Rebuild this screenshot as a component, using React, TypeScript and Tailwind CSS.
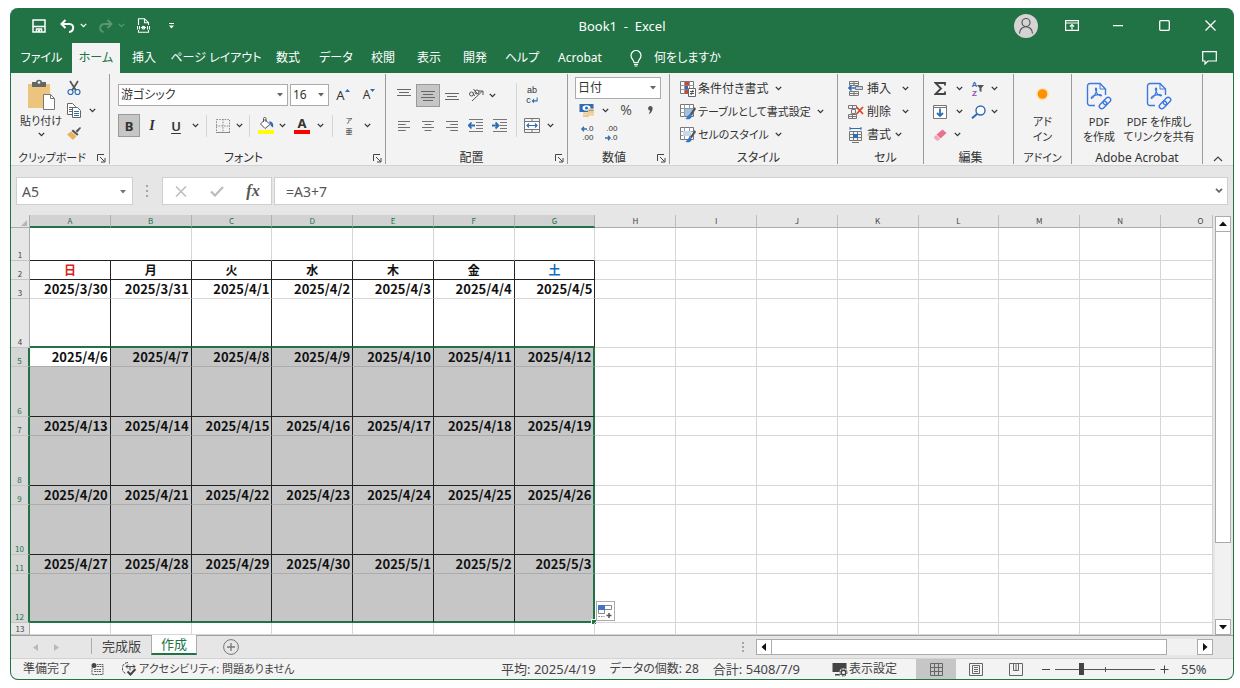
import { useState } from "react";
import type { ReactNode } from "react";
import clsx from "clsx";

const tabs = [
  { name: "ファイル", width: "w-[61px]" },
  { name: "ホーム", width: "w-12" },
  { name: "挿入", width: "w-12" },
  { name: "ページ レイアウト", width: "w-24" },
  { name: "数式", width: "w-12" },
  { name: "データ", width: "w-12" },
  { name: "校閲", width: "w-[46px]" },
  { name: "表示", width: "w-[46px]" },
  { name: "開発", width: "w-[46px]" },
  { name: "ヘルプ", width: "w-12" },
  { name: "Acrobat", width: "w-[68px]" },
];

const columns = ["A", "B", "C", "D", "E", "F", "G", "H", "I", "J", "K", "L", "M", "N", "O"];
const weekdays = ["日", "月", "火", "水", "木", "金", "土"];

const rows: { id: number; height: string; cells?: string[] }[] = [
  { id: 1, height: "h-[33px]" },
  { id: 2, height: "h-[19px]", cells: weekdays },
  {
    id: 3,
    height: "h-[19px]",
    cells: ["2025/3/30", "2025/3/31", "2025/4/1", "2025/4/2", "2025/4/3", "2025/4/4", "2025/4/5"],
  },
  { id: 4, height: "h-[49px]" },
  {
    id: 5,
    height: "h-[19px]",
    cells: ["2025/4/6", "2025/4/7", "2025/4/8", "2025/4/9", "2025/4/10", "2025/4/11", "2025/4/12"],
  },
  { id: 6, height: "h-[50px]" },
  {
    id: 7,
    height: "h-[19px]",
    cells: ["2025/4/13", "2025/4/14", "2025/4/15", "2025/4/16", "2025/4/17", "2025/4/18", "2025/4/19"],
  },
  { id: 8, height: "h-[50px]" },
  {
    id: 9,
    height: "h-[19px]",
    cells: ["2025/4/20", "2025/4/21", "2025/4/22", "2025/4/23", "2025/4/24", "2025/4/25", "2025/4/26"],
  },
  { id: 10, height: "h-[50px]" },
  {
    id: 11,
    height: "h-[19px]",
    cells: ["2025/4/27", "2025/4/28", "2025/4/29", "2025/4/30", "2025/5/1", "2025/5/2", "2025/5/3"],
  },
  { id: 12, height: "h-[49px]" },
  { id: 13, height: "h-3" },
];

const Chevron = ({ className = "" }: { className?: string }) => (
  <svg width="7" height="5" viewBox="0 0 7 5" fill="none" stroke="currentColor" strokeWidth="1.3" className={className}>
    <path d="M.8.9 3.5 3.6 6.2.9" />
  </svg>
);

const IconButton = ({
  label,
  className = "w-6 h-[22px]",
  children,
}: {
  label: string;
  className?: string;
  children: ReactNode;
}) => (
  <button type="button" aria-label={label} className={clsx("flex shrink-0 items-center justify-center", className)}>
    {children}
  </button>
);

const Drop = ({ label, className = "w-3 h-[22px]" }: { label: string; className?: string }) => (
  <IconButton label={label} className={className}>
    <Chevron />
  </IconButton>
);

const Separator = () => <div className="mx-1 h-[22px] w-px bg-[#d5d5d5]" />;

const Group = ({
  title,
  className,
  launcher,
  children,
}: {
  title: string;
  className: string;
  launcher?: boolean;
  children: ReactNode;
}) => (
  <section className={clsx("flex shrink-0 flex-col", className)}>
    <div className="flex h-[79px] pt-[3px]">{children}</div>
    <div className="flex h-3 items-center">
      <span className="flex-1 text-center whitespace-nowrap">{title}</span>
      {launcher && (
        <button type="button" aria-label={`${title}の設定`} className="w-4 pl-1">
          <svg width="9" height="9" viewBox="0 0 9 9" fill="none" stroke="#444">
            <path d="M.5 7V.5H7M3 3l4.5 4.5M8 4v4H4" />
          </svg>
        </button>
      )}
    </div>
  </section>
);

const SelectBox = ({ label, value, className }: { label: string; value: string; className: string }) => (
  <label className={clsx("relative block h-[22px] border border-[#ababab] bg-white", className)}>
    <select aria-label={label} className="h-full w-full appearance-none bg-transparent pl-[2px] outline-none">
      <option>{value}</option>
    </select>
    <svg width="6" height="4" viewBox="0 0 6 4" className="pointer-events-none absolute top-2 right-1" fill="#666">
      <path d="M0 0h6L3 3.5z" />
    </svg>
  </label>
);

const AlignLines = ({ lines, width = 14 }: { lines: [number, number, number][]; width?: number }) => (
  <svg width={width} height="12" viewBox="0 0 14 12" preserveAspectRatio="none" stroke="#666">
    {lines.map(([x1, x2, y]) => (
      <path key={y} d={`M${x1} ${y}.5H${x2}`} />
    ))}
  </svg>
);

const IndentIcon = ({ right }: { right?: boolean }) => (
  <svg width="16" height="14" viewBox="0 0 16 14" fill="none" stroke="#777">
    <path d="M1 .5h14M8 3.5h7M8 6.5h7M8 9.5h7M1 12.5h14" />
    {right ? (
      <path d="M0 6.5h6M3.5 3.5 6.5 6.5 3.5 9.5" stroke="#2e6db5" strokeWidth="1.8" />
    ) : (
      <path d="M7 6.5H1M3.5 3.5.8 6.5 3.5 9.5" stroke="#2e6db5" strokeWidth="1.8" />
    )}
  </svg>
);

const StyleIcon = ({ kind }: { kind: "cond" | "table" | "cell" }) => (
  <svg width="16" height="16" viewBox="0 0 16 16" fill="none">
    <path d="M.5.5h13v12H.5z" fill="#fff" stroke="#777" />
    <path d="M.5 4.5h13M.5 8.5h13M4.5.5v12M9.5.5v12" stroke="#999" />
    {kind === "cond" && (
      <>
        <path d="M5 1h4v3.5H5z" fill="#d6452b" />
        <path d="M5 5h3v3.5H5z" fill="#2e6db5" />
        <path d="M5 9h3.5v3.500H5z" fill="#d6452b" />
        <path d="M8.5 7.5h7v8h-7z" fill="#fff" stroke="#666" />
        <path d="M10 10.5h4M10 12.5h4M13 9l-2 5" stroke="#444" strokeWidth=".9" />
      </>
    )}
    {kind === "table" && <path d="M5 5h8v7H5z" fill="#9fc0e4" />}
    {kind === "cell" && <path d="M3 4h8v5H3z" fill="#c5d9f0" />}
    {kind !== "cond" && (
      <>
        <path d="m14.8 3-5 7 1.700 1.500L16 5z" fill="#555" />
        <path d="M9.500 10 5.500 15c2.800.9 6 .2 6.200-3z" fill="#2e78c7" />
      </>
    )}
  </svg>
);

const StyleRow = ({ kind, text, small }: { kind: "cond" | "table" | "cell"; text: string; small?: boolean }) => (
  <button type="button" className="flex h-[23px] items-center gap-[2px] whitespace-nowrap">
    <StyleIcon kind={kind} />
    <span className={small ? "text-[11px]" : ""}>{text}</span>
    <Chevron className="ml-1" />
  </button>
);

const CellIcon = ({ kind }: { kind: "insert" | "delete" | "format" }) => (
  <svg width="16" height="16" viewBox="0 0 16 16" fill="none" stroke="#777">
    {kind === "insert" && (
      <>
        <path d="M1.5.5h9v4h-9zM6 .5v4M1.5 2.5h9M1.5 10.5h9v4h-9zM6 10.5v4M1.5 12.5h9" />
        <path d="M7.5 5.5h7v3h-7z" fill="#c5d9f0" />
        <path d="M7 7H1M3.5 4.5 1 7l2.5 2.5" stroke="#2e6db5" strokeWidth="1.6" />
      </>
    )}
    {kind === "delete" && (
      <>
        <path d="M.5 1.5h8v3h-8zM4.5 1.5v3M.5 10.5h8v4h-8zM4.5 10.5v4M.5 12.5h8M3.5 5.5h4v4h-4z" />
        <path d="m8.5 3 6.5 7M15 3l-6.5 7" stroke="#d6452b" strokeWidth="1.8" />
      </>
    )}
    {kind === "format" && (
      <>
        <path d="M2 1.5h11M2 0v3M13 0v3" stroke="#2e6db5" />
        <path d="M1.5 4.5h12v9h-12zM5.5 4.5v9M9.5 4.5v9M1.5 7.5h12M1.5 10.5h12M4 15.5h7" />
        <path d="M5 7h5v4H5z" fill="#2e6db5" stroke="none" />
      </>
    )}
  </svg>
);

const CellRow = ({ kind, text, wide }: { kind: "insert" | "delete" | "format"; text: string; wide?: boolean }) => (
  <button type="button" className="flex h-[23px] items-center gap-[3px]">
    <CellIcon kind={kind} />
    <span>{text}</span>
    <Chevron className={wide ? "ml-2" : "ml-px"} />
  </button>
);

const PdfIcon = () => (
  <svg width="26" height="29" viewBox="0 0 26 29" fill="none" stroke="#3b78e0" strokeWidth="1.4">
    <path d="M9 23.5H4A2.500 2.500 0 0 1 1.500 21V4A2.500 2.500 0 0 1 4 1.500h10l5.500 5.500v6" />
    <path d="M14 1.5V7h5.5" strokeWidth="1" />
    <path
      d="M5.5 16.500c-1-.9 1-2.600 3-3.200 1.500-2.500 2.500-5.300 2-7-.9-1-1.500.7-.7 2.600 1 2.600 3 4.700 5 5 1.500 0 .8-1.300-1.300-1.300-1.500 0-3.500.3-5 .9-1.200 2-2.300 3.400-3 3z"
      strokeWidth="1.1"
    />
    <g transform="rotate(-45 19 21)">
      <rect x="12" y="18.5" width="8.5" height="5" rx="2.5" />
      <rect x="17.5" y="18.5" width="8.5" height="5" rx="2.5" />
    </g>
  </svg>
);

const TitleBar = () => (
  <header className="grid h-[35px] grid-cols-[1fr_auto_1fr] items-center text-white">
    <div className="flex items-center pl-[18px]">
      <IconButton label="上書き保存" className="h-6 w-5">
        <svg width="14" height="14" viewBox="0 0 14 14" fill="none" stroke="#fff" strokeWidth="1.5">
          <path d="M1 1h12v12H1zM1 7.5h12M4.5 13v-3h5v3" />
          <path d="M6 10.5h2V13H6z" fill="#fff" stroke="none" />
        </svg>
      </IconButton>
      <IconButton label="元に戻す" className="ml-2 h-6 w-5">
        <svg width="15" height="14" viewBox="0 0 15 14" fill="none" stroke="#fff" strokeWidth="2">
          <path d="M5.5 1 1.5 5l4 4M2 5h7.5c5 0 5 7.5-.5 8" />
        </svg>
      </IconButton>
      <Drop label="元に戻す一覧" />
      <IconButton label="やり直し" className="ml-[6px] h-6 w-5 opacity-25">
        <svg width="15" height="14" viewBox="0 0 15 14" fill="none" stroke="#fff" strokeWidth="2">
          <path d="m9.5 1 4 4-4 4M13 5H6.500C1 5 1 12 5.500 13" />
        </svg>
      </IconButton>
      <span className="opacity-25">
        <Drop label="やり直し一覧" />
      </span>
      <IconButton label="PDF" className="ml-[6px] h-6 w-5">
        <svg width="13" height="15" viewBox="0 0 13 15" fill="none" stroke="#fff" strokeWidth="1.100">
          <path d="M1.5 7V.7h6l4 4V7M7.500.7v4h4M1.500 12v2.300h10V12" />
          <path d="M.5 8v3.500M2.500 8v3.500M10.500 8v3.500M12.500 8v3.500M4 9.500h5" />
          <circle cx="6.5" cy="9.7" r="1.3" />
        </svg>
      </IconButton>
      <IconButton label="クイック アクセス" className="ml-2 h-6 w-5">
        <svg width="5" height="6" viewBox="0 0 5 6" fill="#fff">
          <path d="M0 0h5v1H0zM0 2.5h5L2.5 5.5z" />
        </svg>
      </IconButton>
    </div>
    <h1 className="text-[13px] whitespace-pre">Book1&nbsp; -&nbsp; Excel</h1>
    <div className="flex items-center justify-end">
      <IconButton label="アカウント" className="h-8 w-[46px]">
        <svg width="24" height="24" viewBox="0 0 24 24" fill="none" stroke="#555" strokeWidth="1.2">
          <circle cx="12" cy="12" r="12" fill="#d4d4d4" stroke="none" />
          <circle cx="12" cy="8.5" r="4" />
          <path d="M5.5 19.500c0-9 13-9 13 0" />
        </svg>
      </IconButton>
      <IconButton label="リボンの表示オプション" className="h-8 w-[46px]">
        <svg width="14" height="11" viewBox="0 0 14 11" fill="none" stroke="#fff" strokeWidth="1.2">
          <path d="M.6.6h12.800v9.800H.6zM.6 3h12.800M7 9.500v-5M4.800 6.700 7 4.500l2.200 2.200" />
        </svg>
      </IconButton>
      <IconButton label="最小化" className="h-8 w-[46px]">
        <svg width="10" height="2" viewBox="0 0 10 2" fill="#fff">
          <path d="M0 0h10v1.300H0z" />
        </svg>
      </IconButton>
      <IconButton label="最大化" className="h-8 w-[46px]">
        <svg width="11" height="11" viewBox="0 0 11 11" fill="none" stroke="#fff" strokeWidth="1.3">
          <rect x=".7" y=".7" width="9.6" height="9.6" rx="1" />
        </svg>
      </IconButton>
      <IconButton label="閉じる" className="h-8 w-[46px]">
        <svg width="11" height="11" viewBox="0 0 11 11" fill="none" stroke="#fff" strokeWidth="1.3">
          <path d="m.5.5 10 10M10.500.5l-10 10" />
        </svg>
      </IconButton>
    </div>
  </header>
);

const Ribbon = () => (
  <div className="flex h-[93px] border-b border-[#d2d2d2] bg-[#f3f3f3] text-[#333]">
    <div className="flex divide-x divide-[#9b9b9b] py-px">
      <Group title="クリップボード" className="w-[99px] text-[11px]" launcher>
        <button
          type="button"
          className="mt-[2px] ml-[9px] flex w-[42px] flex-col items-center text-[11px] leading-[14px] whitespace-nowrap"
        >
          <svg width="30" height="32" viewBox="0 0 30 32" className="mb-[3px]">
            <path d="M2 5h22v24H2z" fill="#ecc47d" />
            <path d="M6 3h4c0-3 6-3 6 0h4v5H6z" fill="#666" />
            <circle cx="13" cy="3.5" r="1.3" fill="#f3f3f3" />
            <path d="M17.5 15.500h7l4 4v11h-11z" fill="#fff" stroke="#777" />
            <path d="M24.5 15.500v4h4" fill="none" stroke="#777" />
          </svg>
          <span>貼り付け</span>
          <Chevron className="mt-1" />
        </button>
        <div className="flex flex-col">
          <IconButton label="切り取り" className="h-[22px] w-6">
            <svg width="14" height="16" viewBox="0 0 14 16" fill="none">
              <path d="M3 1l6 9.500M11 1 5 10.500" stroke="#555" strokeWidth="1.7" />
              <circle cx="3.5" cy="12" r="2.5" stroke="#2e6db5" strokeWidth="1.2" />
              <circle cx="10.5" cy="12" r="2.5" stroke="#2e6db5" strokeWidth="1.2" />
            </svg>
          </IconButton>
          <div className="flex">
            <IconButton label="コピー" className="h-[23px] w-6">
              <svg width="15" height="15" viewBox="0 0 15 15" fill="#fff" stroke="#666">
                <path d="M.5.5h5l3 3v8h-8zM2 4.500h4M2 6.500h4M2 8.500h4" />
                <path d="M5.5 4.500h5l3 3v7h-8z" />
                <path d="M7 8.500h5M7 10.500h5M7 12.500h5" stroke="#2e6db5" />
              </svg>
            </IconButton>
            <Drop label="コピー一覧" className="h-[23px] w-3" />
          </div>
          <IconButton label="書式のコピー" className="h-[23px] w-6">
            <svg width="14" height="13" viewBox="0 0 14 13">
              <path d="m13 0 1 1-3.500 4.500L8.500 4z" fill="#555" />
              <path d="m6 2.500 5.500 4.700-1.300 1.600L4.500 4z" fill="#555" />
              <path d="m4 4.500 5.500 4.700L6 13 0 7.500z" fill="#ecb060" />
            </svg>
          </IconButton>
        </div>
      </Group>

      <Group title="フォント" className="w-[276px] pl-2" launcher>
        <div className="flex flex-col gap-2 pt-[7px]">
          <div className="flex items-center gap-[2px]">
            <SelectBox label="フォント名" value="游ゴシック" className="w-[170px]" />
            <SelectBox label="フォント サイズ" value="16" className="w-[39px]" />
            <IconButton label="フォント サイズの拡大">
              <span className="text-[13px]">A</span>
              <svg width="5" height="12" viewBox="0 0 5 12" fill="#2e6db5">
                <path d="M0 3h5L2.500 0z" />
              </svg>
            </IconButton>
            <IconButton label="フォント サイズの縮小">
              <span>A</span>
              <svg width="5" height="12" viewBox="0 0 5 12" fill="#2e6db5">
                <path d="M0 0h5L2.500 3z" />
              </svg>
            </IconButton>
          </div>
          <div className="flex items-center">
            <IconButton label="太字" className="h-[23px] w-[22px] border border-[#9a9a9a] bg-[#c6c6c6]">
              <b className="text-[13px]">B</b>
            </IconButton>
            <IconButton label="斜体">
              <span className="font-[Liberation_Serif] text-[14px] font-bold italic">I</span>
            </IconButton>
            <IconButton label="下線">
              <span className="text-[13px] font-semibold underline underline-offset-2">U</span>
            </IconButton>
            <Drop label="下線一覧" className="h-[22px] w-3.5" />
            <Separator />
            <IconButton label="罫線">
              <svg width="14" height="14" viewBox="0 0 14 14" fill="none" stroke="#888">
                <path d="M.5.5h13v13H.5zM7 0v14M0 7h14" strokeDasharray="1.500 1.200" />
                <path d="M0 13.500h14" />
              </svg>
            </IconButton>
            <Drop label="罫線一覧" className="h-[22px] w-2" />
            <span className="w-[2px]" />
            <Separator />
            <IconButton label="塗りつぶしの色">
              <svg width="17" height="17" viewBox="0 0 17 17" fill="none">
                <path d="M7 2.500 12 7.500 7 11.500 2.500 7zM5.500 5V1.500c0-1.500 2.500-1.500 2.500 0V5" stroke="#555" fill="#fff" />
                <path d="M11 4.500c3-.5 5 2 4 6-2-.5-2.500-3-4-6z" fill="#2e6db5" />
                <path d="M0 13h16v4H0z" fill="#ff0" />
              </svg>
            </IconButton>
            <Drop label="塗りつぶし一覧" className="h-[22px] w-2" />
            <IconButton label="フォントの色" className="ml-[2px] h-[22px] w-7 flex-col">
              <b className="text-[13px] leading-[13px]">A</b>
              <i className="h-1 w-4 bg-[#f00]" />
            </IconButton>
            <Drop label="フォントの色一覧" className="h-[22px] w-2" />
            <span className="w-1" />
            <Separator />
            <IconButton label="ふりがな">
              <span className="flex flex-col font-['Noto_Sans_CJK_JP',sans-serif] text-[7px] leading-[11px]">
                <span>ア</span>
                <span>亜</span>
              </span>
            </IconButton>
            <Drop label="ふりがな一覧" />
          </div>
        </div>
      </Group>

      <Group title="配置" className="w-[182px] pl-[6px]" launcher>
        <div className="flex flex-col gap-2 pt-[7px]">
          <div className="flex">
            <IconButton label="上揃え">
              <AlignLines lines={[[0, 14, 0], [2, 12, 3], [0, 14, 6]]} />
            </IconButton>
            <IconButton label="上下中央揃え" className="h-[23px] w-6 border border-[#9a9a9a] bg-[#c6c6c6]">
              <AlignLines lines={[[0, 14, 1], [2, 12, 4], [0, 14, 7], [2, 12, 10]]} />
            </IconButton>
            <IconButton label="下揃え">
              <AlignLines lines={[[0, 14, 4], [2, 12, 7], [0, 14, 10]]} />
            </IconButton>
            <IconButton label="方向">
              <svg width="16" height="14" viewBox="0 0 16 14" fill="none" stroke="#555">
                <circle cx="3.5" cy="6" r="2" />
                <path d="M5 4.500 6.500 8M5.500 1l4 5M4 13 14 3.500M10.500 3H15v4" />
                <circle cx="9" cy="4" r="2" />
              </svg>
            </IconButton>
            <Drop label="方向一覧" className="h-[22px] w-2" />
          </div>
          <div className="flex">
            <IconButton label="左揃え">
              <AlignLines width={12} lines={[[0, 14, 1], [0, 9, 4], [0, 14, 7], [0, 9, 10]]} />
            </IconButton>
            <IconButton label="中央揃え">
              <AlignLines width={12} lines={[[0, 14, 1], [3, 11, 4], [0, 14, 7], [3, 11, 10]]} />
            </IconButton>
            <IconButton label="右揃え">
              <AlignLines width={12} lines={[[0, 14, 1], [5, 14, 4], [0, 14, 7], [5, 14, 10]]} />
            </IconButton>
            <IconButton label="インデントを減らす">
              <IndentIcon />
            </IconButton>
            <IconButton label="インデントを増やす">
              <IndentIcon right />
            </IconButton>
          </div>
        </div>
        <div className="mt-[6px] ml-1 h-[54px] w-px bg-[#d5d5d5]" />
        <div className="flex flex-col gap-2 pt-[7px] pl-[3px]">
          <IconButton label="折り返して全体を表示する">
            <span className="flex flex-col font-['Liberation_Sans',sans-serif] text-[9px] leading-[10px]">
              <span>ab</span>
              <span className="flex items-center">
                c
                <svg width="7" height="8" viewBox="0 0 8 8" fill="none" stroke="#2e6db5" strokeWidth="1.2">
                  <path d="M7 1v4H1.500M3.500 3l-2 2 2 2" />
                </svg>
              </span>
            </span>
          </IconButton>
          <div className="flex">
            <IconButton label="セルを結合して中央揃え">
              <svg width="16" height="15" viewBox="0 0 16 15" fill="none" stroke="#777">
                <path d="M.5.5h15v14H.5zM.5 3.500h15M.5 11.500h15M8 .5v3M8 11.500v3" />
                <path d="M1 4h14v7H1z" fill="#fff" stroke="none" />
                <path d="M3 7.500h10M5 5.500l-2 2 2 2M11 5.500l2 2-2 2" stroke="#2e6db5" strokeWidth="1.2" />
              </svg>
            </IconButton>
            <Drop label="結合一覧" />
          </div>
        </div>
      </Group>

      <Group title="数値" className="w-[102px] pl-[7px]" launcher>
        <div className="flex flex-col">
          <SelectBox label="表示形式" value="日付" className="w-[86px]" />
          <div className="flex">
            <IconButton label="通貨表示形式">
              <svg width="16" height="15" viewBox="0 0 16 15" fill="none">
                <path d="M.5 1h14v8H.5z" fill="#2e6db5" />
                <ellipse cx="7.5" cy="5" rx="4" ry="2.8" fill="#fff" />
                <circle cx="7.5" cy="5" r="1.5" fill="#2e6db5" />
                <path d="M9 5.500h6v2H9zM9 8h6v2H9zM9 10.500h6v2H9zM4 9.500h6v2H4zM4 12h6v2H4z" fill="#f0c98a" />
              </svg>
            </IconButton>
            <Drop label="通貨一覧" />
            <IconButton label="パーセント スタイル" className="h-[22px] w-[30px]">
              <span className="text-[14px] text-[#555]">%</span>
            </IconButton>
            <IconButton label="桁区切りスタイル" className="h-[22px] w-[18px]">
              <svg width="5" height="8" viewBox="0 0 5 8" fill="#555">
                <path d="M2.500 0C5.500 0 5.500 5 1.500 8L.8 7.300C2 6 2 5 2 4.500-.7 4.500-.4 0 2.500 0z" />
              </svg>
            </IconButton>
          </div>
          <div className="flex pt-px font-['Liberation_Sans',sans-serif] text-[8px] leading-[9px]">
            <IconButton label="小数点以下の表示桁数を増やす">
              <span className="flex flex-col items-end">
                <span className="flex items-center">
                  <svg width="6" height="6" viewBox="0 0 6 6" fill="none" stroke="#2e6db5" strokeWidth="1.3">
                    <path d="M6 3H1M3 .8.8 3 3 5.200" />
                  </svg>
                  .0
                </span>
                <span>.00</span>
              </span>
            </IconButton>
            <IconButton label="小数点以下の表示桁数を減らす">
              <span className="flex flex-col items-end">
                <span>.00</span>
                <span className="flex items-center">
                  <svg width="6" height="6" viewBox="0 0 6 6" fill="none" stroke="#2e6db5" strokeWidth="1.3">
                    <path d="M0 3h5M3 .8 5.200 3 3 5.200" />
                  </svg>
                  .0
                </span>
              </span>
            </IconButton>
          </div>
        </div>
      </Group>

      <Group title="スタイル" className="w-[168px] pl-[10px]">
        <div className="flex flex-col">
          <StyleRow kind="cond" text="条件付き書式" />
          <StyleRow kind="table" text="テーブルとして書式設定" small />
          <StyleRow kind="cell" text="セルのスタイル" small />
        </div>
      </Group>

      <Group title="セル" className="w-[86px] pl-[10px]">
        <div className="flex flex-col">
          <CellRow kind="insert" text="挿入" wide />
          <CellRow kind="delete" text="削除" wide />
          <CellRow kind="format" text="書式" />
        </div>
      </Group>

      <Group title="編集" className="w-[90px] pl-1">
        <div className="flex flex-col">
          <div className="flex">
            <IconButton label="オート SUM" className="h-[23px] w-6">
              <svg width="12" height="13" viewBox="0 0 12 13" fill="none" stroke="#444" strokeWidth="1.8">
                <path d="M11 3.500V1H1.500L7 6.500 1.500 12H11V9.500" />
              </svg>
            </IconButton>
            <Drop label="オート SUM 一覧" className="h-[23px] w-3.5" />
            <IconButton label="並べ替えとフィルター" className="h-[23px] w-6">
              <span className="flex flex-col font-['Liberation_Sans',sans-serif] text-[8px] leading-[9px] font-bold">
                <span className="text-[#2e6db5]">A</span>
                <span className="text-[#8e4bb5]">Z</span>
              </span>
              <svg width="7" height="7" viewBox="0 0 7 7" fill="#555">
                <path d="M0 0h7L4.500 3v4l-2-1V3z" />
              </svg>
            </IconButton>
            <Drop label="並べ替え一覧" className="h-[23px] w-2" />
          </div>
          <div className="flex">
            <IconButton label="フィル" className="h-[23px] w-6">
              <svg width="14" height="14" viewBox="0 0 14 14" fill="none" stroke="#777">
                <path d="M.5.5h13v13H.5z" fill="#fff" />
                <path d="M.5 2.500h13" />
                <path d="M7 3.500V11M4 8l3 3 3-3" stroke="#2e6db5" strokeWidth="1.8" />
              </svg>
            </IconButton>
            <Drop label="フィル一覧" className="h-[23px] w-3.5" />
            <IconButton label="検索と選択" className="h-[23px] w-6">
              <svg width="15" height="14" viewBox="0 0 15 14" fill="none" stroke="#2e6db5">
                <circle cx="9.5" cy="5.5" r="4.5" strokeWidth="1.4" fill="#fff" />
                <path d="M6.300 8.700 1 13.300" strokeWidth="2" />
              </svg>
            </IconButton>
            <Drop label="検索一覧" className="h-[23px] w-2" />
          </div>
          <div className="flex">
            <IconButton label="クリア" className="h-[23px] w-6">
              <svg width="13" height="12" viewBox="0 0 13 12">
                <path d="M8.500.5 12.500 4 6.500 9.500 2.500 5.500z" fill="#e8718d" />
                <path d="m2 6 4 4-1.500 1.500H2.500L0 9V8z" fill="#f3a6b8" />
              </svg>
            </IconButton>
            <Drop label="クリア一覧" className="h-[23px] w-2.5" />
          </div>
        </div>
      </Group>

      <Group title="アドイン" className="w-[58px] text-[11px]">
        <button type="button" className="flex flex-1 flex-col items-center leading-[15px]">
          <svg width="13" height="37" viewBox="0 0 13 37">
            <circle cx="6.5" cy="17" r="6.3" fill="#fde3bd" />
            <circle cx="6.5" cy="17" r="4.8" fill="#ff9000" />
          </svg>
          <span>アド</span>
          <span>イン</span>
        </button>
      </Group>

      <Group title="Adobe Acrobat" className="w-[131px]">
        <div className="flex pt-[5px] pl-[2px] text-[11px] leading-[15px] whitespace-nowrap">
          <button type="button" className="flex w-[50px] flex-col items-center">
            <PdfIcon />
            <span className="mt-[3px]">PDF</span>
            <span>を作成</span>
          </button>
          <button type="button" className="flex w-[70px] flex-col items-center">
            <PdfIcon />
            <span className="mt-[3px]">PDF を作成し</span>
            <span>てリンクを共有</span>
          </button>
        </div>
      </Group>
      <div />
    </div>
    <button type="button" aria-label="リボンを折りたたむ" className="ml-auto flex w-5 items-end pb-[3px]">
      <svg width="10" height="6" viewBox="0 0 10 6" fill="none" stroke="#444" strokeWidth="1.2">
        <path d="m1 5 4-4 4 4" />
      </svg>
    </button>
  </div>
);

const FormulaBar = () => (
  <div className="flex h-[49px] items-start bg-[#e6e6e6] px-[5px] pt-[11px] text-[14px] text-[#555]">
    <div className="relative h-7 w-[117px] border border-[#cfcfcf] bg-white">
      <input aria-label="名前ボックス" defaultValue="A5" className="h-full w-full bg-transparent px-[5px] outline-none" />
      <svg width="6" height="4" viewBox="0 0 6 4" className="pointer-events-none absolute top-3 right-[6px]" fill="#777">
        <path d="M0 0h6L3 3.500z" />
      </svg>
    </div>
    <svg width="29" height="28" viewBox="0 0 29 28" fill="#a5a5a5">
      <path d="M13 8h2v2h-2zM13 13h2v2h-2zM13 18h2v2h-2z" />
    </svg>
    <div className="flex h-7 w-[110px] items-center border border-[#cfcfcf] bg-white">
      <IconButton label="キャンセル" className="h-full w-9">
        <svg width="12" height="11" viewBox="0 0 12 11" fill="none" stroke="#bdbdbd" strokeWidth="1.5">
          <path d="m1 .5 10 10M11 .5l-10 10" />
        </svg>
      </IconButton>
      <IconButton label="入力" className="h-full w-9">
        <svg width="14" height="11" viewBox="0 0 14 11" fill="none" stroke="#bdbdbd" strokeWidth="2.3">
          <path d="m1 5.500 4 4L13 1" />
        </svg>
      </IconButton>
      <IconButton label="関数の挿入" className="h-full w-9">
        <span className="font-[Liberation_Serif] text-[16px] font-bold italic">fx</span>
      </IconButton>
    </div>
    <div className="relative ml-[2px] h-7 flex-1 border border-[#cfcfcf] bg-white">
      <input aria-label="数式バー" defaultValue="=A3+7" className="h-full w-full bg-transparent px-[11px] outline-none" />
      <svg
        width="8"
        height="5"
        viewBox="0 0 8 5"
        className="pointer-events-none absolute top-[10px] right-1"
        fill="none"
        stroke="#666"
        strokeWidth="1.8"
      >
        <path d="m1 .8 3 3 3-3" />
      </svg>
    </div>
  </div>
);

const Sheet = () => (
  <table className="w-full table-fixed border-separate border-spacing-0 bg-white font-['Noto_Sans_CJK_JP',sans-serif]">
    <colgroup>
      <col className="w-[19px]" />
      {columns.map((c) => (
        <col key={c} className={c === "O" ? "w-[52px]" : ""} />
      ))}
    </colgroup>
    <thead>
      <tr className="h-[13px] text-[8px] leading-[10px]">
        <th className="border-r border-b border-[#ababab] bg-[#e6e6e6] p-0">
          <svg width="6" height="6" viewBox="0 0 6 6" className="mt-[3px] mr-[2px] ml-auto" fill="#b5b5b5">
            <path d="M6 0v6H0z" />
          </svg>
        </th>
        {columns.map((c, i) => (
          <th
            key={c}
            className={clsx(
              "p-0 font-normal",
              i < 7
                ? "border-r border-b-2 border-r-[#b0b0b0] border-b-[#217346] bg-[#d2d2d2] text-[#217346]"
                : "border-r border-b border-r-[#bdbdbd] border-b-[#ababab] bg-[#e6e6e6] text-[#444]",
              c === "O" && "pl-7"
            )}
          >
            {c}
          </th>
        ))}
      </tr>
    </thead>
    <tbody>
      {rows.map((row) => {
        const selected = row.id >= 5 && row.id <= 12;
        return (
          <tr key={row.id} className={row.height}>
            <th
              className={clsx(
                "border-b border-b-[#c4c4c4] p-0 align-bottom text-[8px] leading-[10px] font-normal",
                selected
                  ? "border-r-2 border-r-[#217346] bg-[#d6d6d6] text-[#217346]"
                  : "border-r border-r-[#ababab] bg-[#e6e6e6] text-[#444]"
              )}
            >
              {row.id}
            </th>
            {columns.map((c, i) => {
              // A1:B1 is one merged cell
              if (row.id === 1 && i === 1) return null;
              const inCalendar = i < 7 && row.id <= 12;
              const text = i < 7 ? row.cells?.[i] : undefined;
              return (
                <td
                  key={c}
                  colSpan={row.id === 1 && i === 0 ? 2 : 1}
                  className={clsx(
                    "relative p-0 align-top font-bold text-[#111]",
                    row.id === 2 ? "text-center text-[12px] leading-[17px]" : "pr-[2px] text-right text-[13px] leading-[17px]",
                    row.id === 2 && i === 0 && "text-[#e02020]",
                    row.id === 2 && i === 6 && "text-[#1070c0]",
                    selected && i < 7 && !(row.id === 5 && i === 0) && "bg-[#c6c6c6]",
                    i === 6 && selected
                      ? "border-r-2 border-r-[#217346]"
                      : inCalendar && row.id > 1
                        ? "border-r border-r-[#222]"
                        : "border-r border-r-[#d6d6d6]",
                    !inCalendar
                      ? "border-b border-b-[#d6d6d6]"
                      : row.id === 4 || row.id === 12
                        ? "border-b-2 border-b-[#217346]"
                        : row.id === 1 || row.id % 2 === 0
                          ? "border-b border-b-[#222]"
                          : selected
                            ? "border-b border-b-[#acacac]"
                            : "border-b border-b-[#d6d6d6]"
                  )}
                >
                  {text}
                  {row.id === 12 && i === 6 && (
                    <>
                      <i className="absolute -right-[3px] -bottom-[3px] h-[5px] w-[5px] border-t border-l border-white bg-[#217346]" />
                      <button
                        type="button"
                        aria-label="オートフィル オプション"
                        className="absolute bottom-0 left-full z-10 ml-[3px] h-5 w-[19px] border border-[#ababab] bg-white"
                      >
                        <svg width="16" height="16" viewBox="0 0 16 16" fill="none" stroke="#888">
                          <path d="M1.500 2.500h13v4h-13z" />
                          <path d="M1 2h7v5H1z" fill="#3f74c9" stroke="none" />
                          <path d="M1.500 7v3.500h6V7" />
                          <path d="M1.500 13.500h6" strokeDasharray="1.500 1" />
                          <path d="M12 10v5M9.500 12.500h5" stroke="#555" strokeWidth="1.5" />
                        </svg>
                      </button>
                    </>
                  )}
                </td>
              );
            })}
          </tr>
        );
      })}
    </tbody>
  </table>
);

const ScrollButton = ({ label, d }: { label: string; d: string }) => (
  <IconButton label={label} className="h-4 w-4 border border-[#ababab] bg-white">
    <svg width="8" height="8" viewBox="0 0 8 8" fill="#111">
      <path d={d} />
    </svg>
  </IconButton>
);

const SheetTabs = () => (
  <div className="flex h-[23px] items-start border-t border-[#a0a0a0] bg-[#e6e6e6] pr-5 text-[13px] leading-[18px]">
    <div className="flex h-[22px] w-20 items-center gap-4 pl-[22px]">
      <svg width="5" height="7" viewBox="0 0 5 7" fill="#b9b9b9">
        <path d="M5 0v7L0 3.500z" />
      </svg>
      <svg width="5" height="7" viewBox="0 0 5 7" fill="#b9b9b9">
        <path d="M0 0v7l5-3.500z" />
      </svg>
    </div>
    <button type="button" className="mt-[2px] h-4 border-l border-[#ababab] px-[10px] leading-3 text-[#444]">
      完成版
    </button>
    <button
      type="button"
      className="-mt-px h-5 border-x border-b-2 border-x-[#ababab] border-b-[#217346] bg-white px-[9px] leading-4 text-[#217346]"
    >
      作成
    </button>
    <IconButton label="新しいシート" className="ml-[25px] h-[22px] w-[18px]">
      <svg width="16" height="16" viewBox="0 0 16 16" fill="none" stroke="#777">
        <circle cx="8" cy="8" r="7.4" />
        <path d="M8 4v8M4 8h8" strokeWidth="1.3" />
      </svg>
    </IconButton>
    <svg width="4" height="22" viewBox="0 0 4 22" fill="#a5a5a5" className="ml-auto">
      <path d="M1 6h2v2H1zM1 10h2v2H1zM1 14h2v2H1z" />
    </svg>
    <div className="mt-[3px] ml-[11px] flex w-[38%] bg-[#f1f1f1]">
      <ScrollButton label="左へスクロール" d="M6 0v8L1.500 4z" />
      <div className="-ml-px h-4 w-[396px] border border-[#ababab] bg-white" />
      <div className="ml-auto">
        <ScrollButton label="右へスクロール" d="M2 0v8l4.500-4z" />
      </div>
    </div>
  </div>
);

const StatusBar = () => (
  <footer className="flex h-[21px] items-center border-t border-[#d2d2d2] bg-[#f3f3f3] pl-3 whitespace-nowrap text-[#444]">
    <span>準備完了</span>
    <svg width="13" height="12" viewBox="0 0 13 12" fill="none" stroke="#666" className="ml-5">
      <path d="M1 4.500V11.500h11V1.500H6M6 3.500h6M3 6.500h7M3 8.500h7" strokeDasharray="2 .5" />
      <circle cx="3" cy="2.5" r="2.5" fill="#444" stroke="none" />
    </svg>
    <button type="button" className="ml-[18px] flex items-center gap-[2px] text-[11px]">
      <svg width="15" height="14" viewBox="0 0 15 14" fill="none" stroke="#444">
        <path d="M6 .5C-1 1-1.500 10 4 11.500" strokeDasharray="3 1" />
        <path d="M4 4.500h9M6 2.500l-2 2 2 2M11 2.500l2 2-2 2M8 4.500v4" />
        <path d="m5.500 9.500 3 3 5-5.500" strokeWidth="2" />
      </svg>
      アクセシビリティ: 問題ありません
    </button>
    <div className="ml-auto flex items-center gap-[14px] text-[13px]">
      <span>平均: 2025/4/19</span>
      <span className="text-[12px]">データの個数: 28</span>
      <span>合計: 5408/7/9</span>
    </div>
    <button type="button" className="mr-[19px] ml-8 flex items-center gap-px">
      <svg width="16" height="15" viewBox="0 0 16 15" fill="none">
        <path d="M.5 1h14v9H.5zM3 12h5v1.500H3z" fill="#444" />
        <circle cx="11.5" cy="10.5" r="4.3" fill="#f3f3f3" />
        <circle cx="11.5" cy="10.5" r="2.3" stroke="#444" strokeWidth="1.4" />
        <circle cx="11.5" cy="10.5" r="3.6" stroke="#444" strokeDasharray="1.500 1.300" />
      </svg>
      表示設定
    </button>
    <IconButton label="標準" className="h-5 w-10 bg-[#c6c6c6]">
      <svg width="13" height="13" viewBox="0 0 13 13" fill="none" stroke="#666">
        <path d="M.5.5h12v12H.5zM4.500.5v12M8.500.5v12M.5 4.500h12M.5 8.500h12" />
      </svg>
    </IconButton>
    <IconButton label="ページ レイアウト" className="h-5 w-10">
      <svg width="14" height="13" viewBox="0 0 14 13" fill="none" stroke="#666">
        <path d="M.5.5h13v12H.5zM3.500 2.500h7v8h-7zM5 4.500h4M5 6.500h4M5 8.500h4" />
      </svg>
    </IconButton>
    <IconButton label="改ページ プレビュー" className="h-5 w-10">
      <svg width="14" height="13" viewBox="0 0 14 13" fill="none" stroke="#666">
        <path d="M.5.5h13v12H.5zM4.500.5v7h5v-7M7 .5v7" />
      </svg>
    </IconButton>
    <IconButton label="縮小" className="h-5 w-[19px]">
      <svg width="8" height="1" viewBox="0 0 8 1" fill="#444">
        <path d="M0 0h8v1H0z" />
      </svg>
    </IconButton>
    <span className="relative flex w-[100px] items-center">
      <i className="absolute left-0 h-px w-full bg-[#555]" />
      <i className="absolute left-1/2 h-[5px] w-px bg-[#555]" />
      <input
        type="range"
        aria-label="ズーム"
        min={0}
        max={100}
        defaultValue={25}
        className="relative h-4 w-full appearance-none bg-transparent [&::-webkit-slider-thumb]:h-3 [&::-webkit-slider-thumb]:w-[5px] [&::-webkit-slider-thumb]:appearance-none [&::-webkit-slider-thumb]:bg-[#444]"
      />
    </span>
    <IconButton label="拡大" className="h-5 w-[18px]">
      <svg width="9" height="9" viewBox="0 0 9 9" stroke="#444">
        <path d="M4.500.5v8M.5 4.500h8" />
      </svg>
    </IconButton>
    <span className="w-[60px] pl-2 text-[13px]">55%</span>
  </footer>
);

export default function App() {
  const [activeTab, setActiveTab] = useState("ホーム");

  return (
    <div className="min-h-screen bg-white pt-2 pr-[6px] pb-2 pl-[10px] font-['Noto_Sans','Noto_Sans_CJK_JP',sans-serif] text-[12px] leading-4 [font-feature-settings:'palt']">
      <div className="overflow-hidden rounded-lg border-x border-b border-[#217346] bg-[#217346]">
        <TitleBar />
        <nav className="flex h-[30px] text-white">
          {tabs.map((tab) => (
            <button
              key={tab.name}
              type="button"
              onClick={() => setActiveTab(tab.name)}
              className={clsx(
                "shrink-0 whitespace-nowrap",
                tab.width,
                activeTab === tab.name && "bg-[#f3f3f3] text-[#217346]"
              )}
            >
              {tab.name}
            </button>
          ))}
          <button type="button" className="flex items-center gap-3 pl-4 whitespace-nowrap">
            <svg width="12" height="17" viewBox="0 0 12 17" fill="none" stroke="#fff" strokeWidth="1.2">
              <path d="M4 12.500c0-2.500-3-3.500-3-7a5 5 0 0 1 10 0c0 3.500-3 4.500-3 7zM4 14.300h4M4.500 16h3" />
            </svg>
            何をしますか
          </button>
          <button type="button" aria-label="コメント" className="mr-4 ml-auto">
            <svg width="15" height="14" viewBox="0 0 15 14" fill="none" stroke="#fff" strokeWidth="1.2">
              <path d="M.7.7h13.600v9.300H6l-3 3v-3H.7z" />
            </svg>
          </button>
        </nav>
        <Ribbon />
        <FormulaBar />
        <div className="flex bg-[#e6e6e6]">
          <main className="min-w-0 flex-1">
            <Sheet />
          </main>
          <div className="mt-px mr-[2px] ml-[2px] flex w-4 flex-col bg-[#f1f1f1]">
            <ScrollButton label="上へスクロール" d="M0 6h8L4 1.500z" />
            <div className="-mt-px h-[312px] border border-[#ababab] bg-white" />
            <div className="mt-auto">
              <ScrollButton label="下へスクロール" d="M0 2h8L4 6.500z" />
            </div>
          </div>
        </div>
        <SheetTabs />
        <StatusBar />
      </div>
    </div>
  );
}
